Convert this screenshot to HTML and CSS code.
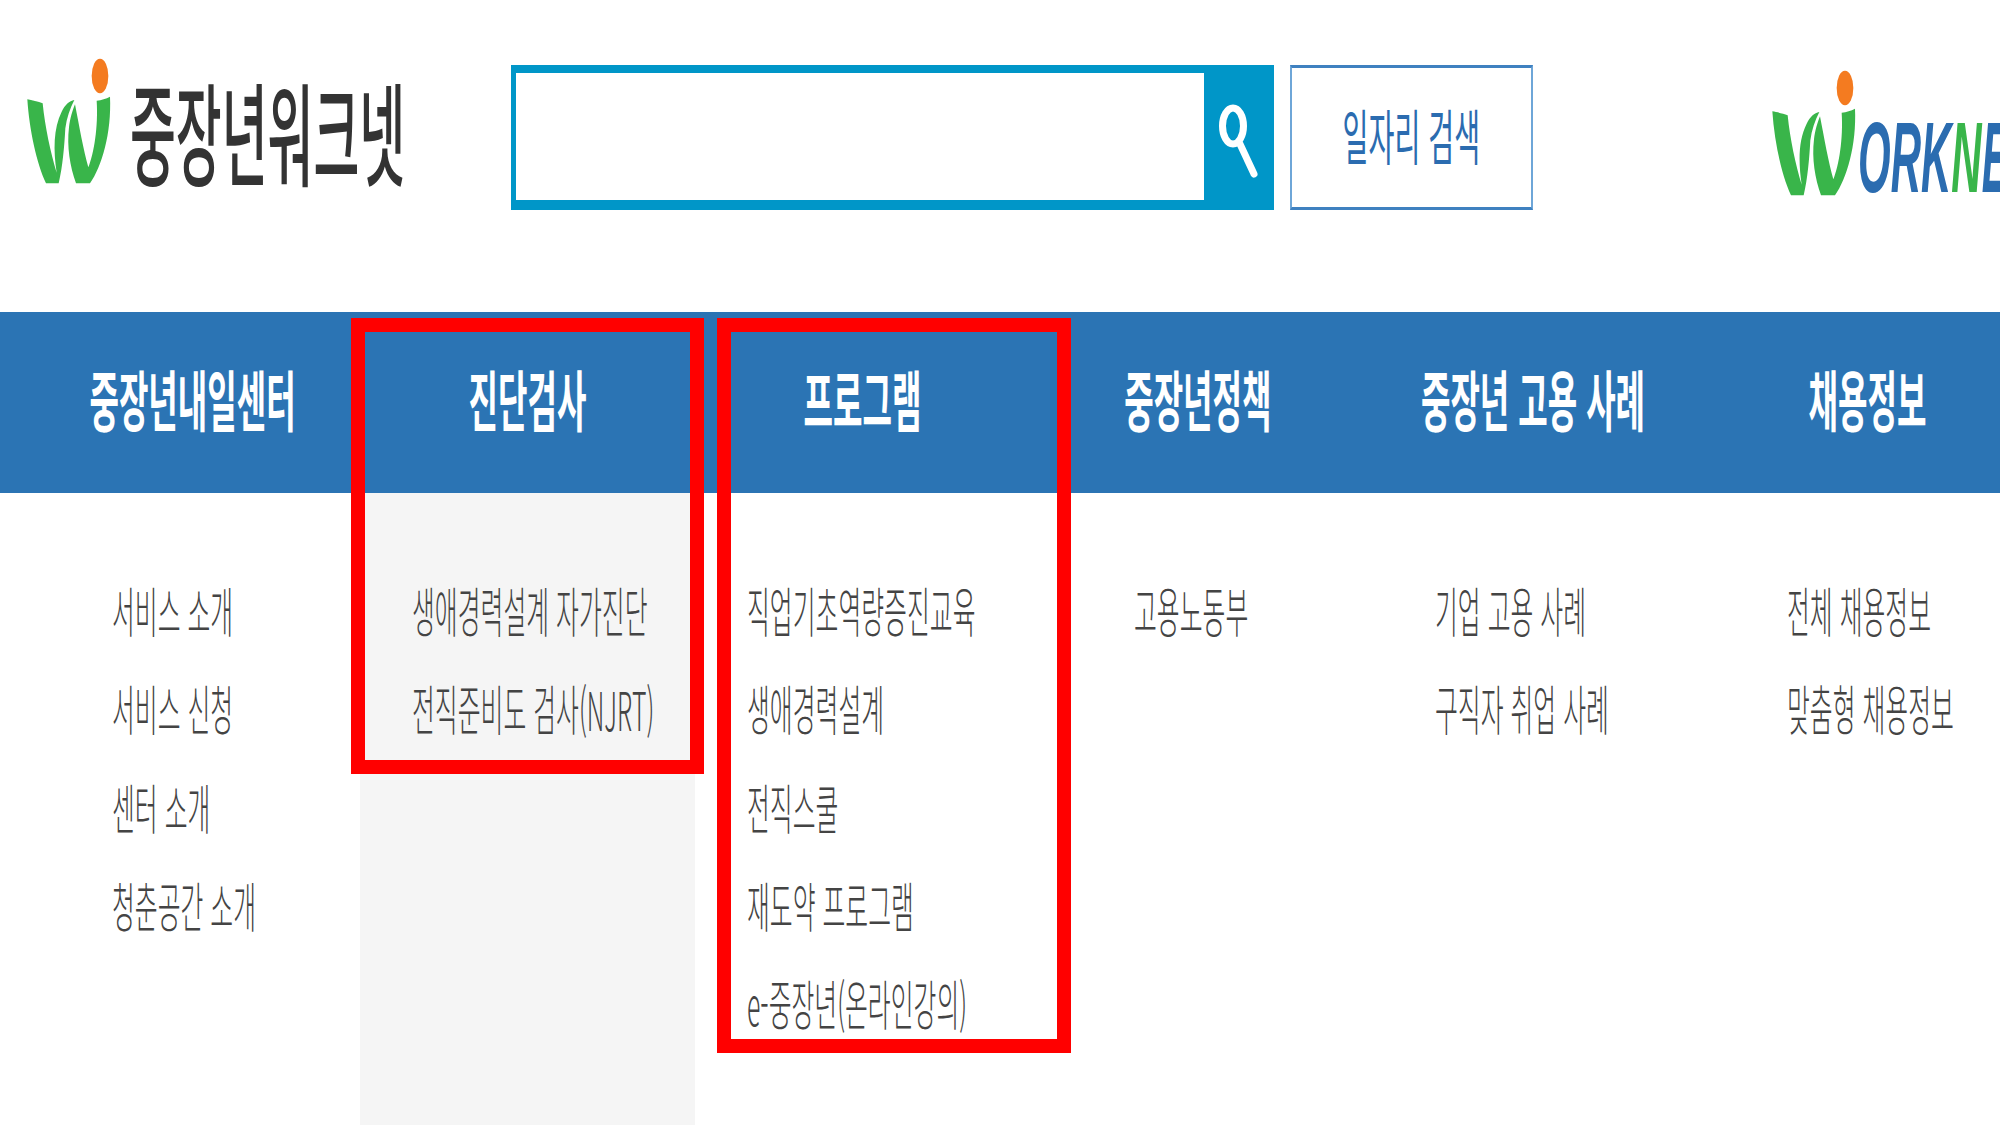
FILE: index.html
```html
<!DOCTYPE html>
<html lang="ko">
<head>
  <meta charset="UTF-8" />
  <title>중장년워크넷</title>
  <link rel="stylesheet" href="styles.css">
</head>
<body>
  <svg class="defs" width="0" height="0">
    <symbol id="wMark" viewBox="0 0 300 435">
      <ellipse cx="240" cy="78" rx="25" ry="52" fill="#f47b20"/>
      <path fill="#39b54a" d="M22 148 C35 150 55 155 68 160 C75 230 92 310 110 368 C100 300 100 235 125 185 C135 165 148 152 163 150 C150 175 140 205 136 235 C133 290 128 350 116 400 L78 400 C50 340 28 240 22 148Z"/>
      <path fill="#39b54a" d="M165 163 C178 230 190 300 205 352 C222 310 235 230 230 152 C245 150 258 146 270 140 C275 250 245 350 210 400 L168 400 C150 350 140 290 147 232 C150 205 158 180 165 163Z"/>
    </symbol>
  </svg>

  <div class="page">
    <header>
      <a class="logo">
        <svg class="mark"><use href="#wMark"/></svg>
        <span class="logo-name squeeze">중장년워크넷</span>
      </a>
      <form class="search">
        <input type="text" />
        <button type="button" class="search-btn">
          <svg width="70" height="127" viewBox="0 0 70 127">
            <ellipse cx="29" cy="53" rx="10.5" ry="18" fill="none" stroke="#fff" stroke-width="7"/>
            <path d="M36 71 L50 101" stroke="#fff" stroke-width="7" stroke-linecap="round"/>
          </svg>
        </button>
      </form>
      <a class="job-btn"><span class="squeeze">일자리 검색</span></a>
      <a class="worknet">
        <svg class="mark"><use href="#wMark"/></svg>
        <span class="worknet-name">ORK<em>N</em>ET</span>
      </a>
    </header>

    <nav class="gnb">
      <a><span class="squeeze">중장년내일센터</span></a>
      <a><span class="squeeze">진단검사</span></a>
      <a><span class="squeeze">프로그램</span></a>
      <a><span class="squeeze">중장년정책</span></a>
      <a><span class="squeeze">중장년 고용 사례</span></a>
      <a><span class="squeeze">채용정보</span></a>
    </nav>

    <div class="submenu">
      <ul class="col-center">
        <li><span class="squeeze">서비스 소개</span></li>
        <li><span class="squeeze">서비스 신청</span></li>
        <li><span class="squeeze">센터 소개</span></li>
        <li><span class="squeeze">청춘공간 소개</span></li>
      </ul>
      <ul class="col-diag">
        <li><span class="squeeze">생애경력설계 자가진단</span></li>
        <li><span class="squeeze">전직준비도 검사(NJRT)</span></li>
      </ul>
      <ul class="col-program">
        <li><span class="squeeze">직업기초역량증진교육</span></li>
        <li><span class="squeeze">생애경력설계</span></li>
        <li><span class="squeeze">전직스쿨</span></li>
        <li><span class="squeeze">재도약 프로그램</span></li>
        <li><span class="squeeze">e-중장년(온라인강의)</span></li>
      </ul>
      <ul class="col-policy">
        <li><span class="squeeze">고용노동부</span></li>
      </ul>
      <ul class="col-cases">
        <li><span class="squeeze">기업 고용 사례</span></li>
        <li><span class="squeeze">구직자 취업 사례</span></li>
      </ul>
      <ul class="col-jobs">
        <li><span class="squeeze">전체 채용정보</span></li>
        <li><span class="squeeze">맞춤형 채용정보</span></li>
      </ul>
    </div>

    <div class="highlight highlight-diag"></div>
    <div class="highlight highlight-program"></div>
  </div>
</body>
</html>
```

FILE: styles.css
```css
html, body {
  margin: 0;
  padding: 0;
  background: #fff;
  overflow: hidden;
}
body {
  font-family: "Noto Sans CJK KR", "Noto Sans", sans-serif;
  color: #444;
}
a {
  color: inherit;
  text-decoration: none;
}
.defs {
  position: absolute;
}
.page {
  position: relative;
  width: 2000px;
  height: 1125px;
  overflow: hidden;
}
.squeeze {
  display: inline-block;
  white-space: nowrap;
  transform: scaleX(0.46);
  transform-origin: left center;
}

/* header */
header {
  display: flex;
  align-items: flex-start;
  height: 312px;
  box-sizing: border-box;
  padding-top: 65px;
}
.mark {
  width: 100px;
  height: 145px;
  flex: none;
}
.logo {
  display: flex;
  width: 491px;
  flex: none;
  margin-left: 20px;
  margin-top: -15px;
  overflow: visible;
}
.logo-name {
  font-size: 112px;
  font-weight: 500;
  line-height: 145px;
  color: #333;
  margin-left: 10px;
  margin-top: 7px;
  transform: scaleX(0.445);
}
.search {
  display: flex;
  width: 763px;
  height: 145px;
  flex: none;
  box-sizing: border-box;
  margin: 0;
  padding: 8px 0 10px 5px;
  background: #0096c8;
}
.search input {
  flex: 1;
  min-width: 0;
  border: none;
  margin: 0;
  padding: 0;
  background: #fff;
}
.search-btn {
  width: 70px;
  height: 127px;
  flex: none;
  border: none;
  padding: 0;
  background: none;
}
.search-btn svg {
  display: block;
}
.job-btn {
  display: flex;
  justify-content: center;
  align-items: center;
  width: 243px;
  height: 145px;
  flex: none;
  box-sizing: border-box;
  margin-left: 16px;
  padding-bottom: 8px;
  border: 2px solid #6ea6d8;
  border-top: 3px solid #3f81c0;
  border-bottom: 3px solid #3f81c0;
  color: #2b6cb0;
  font-size: 60px;
  overflow: hidden;
}
.job-btn .squeeze {
  transform: scaleX(0.47);
  transform-origin: center;
  flex: none;
}
.worknet {
  display: flex;
  margin-left: 232px;
  margin-top: -3px;
}
.worknet-name {
  font-family: "Liberation Sans", sans-serif;
  font-size: 100px;
  font-weight: bold;
  font-style: italic;
  line-height: 1;
  color: #2b6cb0;
  white-space: nowrap;
  margin-left: -7px;
  margin-top: 45px;
  transform: scaleX(0.42);
  transform-origin: left center;
}
.worknet-name em {
  font-style: inherit;
  color: #39b54a;
}

/* main menu */
.gnb {
  display: grid;
  grid-template-columns: repeat(6, 335px);
  height: 181px;
  padding-left: 25px;
  background: #2b74b4;
}
.gnb a {
  display: flex;
  justify-content: center;
  align-items: center;
  color: #fff;
  font-size: 66px;
  font-weight: 700;
  padding-bottom: 11px;
}
.gnb .squeeze {
  flex: none;
  transform: scaleX(0.485);
  transform-origin: center;
}

/* dropdown columns */
.submenu {
  display: grid;
  grid-template-columns: repeat(6, 335px);
  height: 632px;
  padding-left: 25px;
}
.submenu ul {
  list-style: none;
  margin: 0;
  padding: 68px 0 0 0;
  min-width: 0;
}
.submenu li {
  height: 98.3px;
  line-height: 98.3px;
  font-size: 54px;
  font-weight: 300;
  white-space: nowrap;
}
.col-center { padding-left: 87px !important; }
.col-diag {
  padding-left: 52px !important;
  background: #f5f5f5;
}
.col-program { padding-left: 52px !important; }
.col-policy { padding-left: 104px !important; }
.col-cases { padding-left: 70px !important; }
.col-jobs { padding-left: 87px !important; }

/* red marker boxes drawn over the menu */
.highlight {
  position: absolute;
  box-sizing: border-box;
  border: 14px solid #f00;
  top: 318px;
}
.highlight-diag {
  left: 351px;
  width: 353px;
  height: 456px;
}
.highlight-program {
  left: 717px;
  width: 354px;
  height: 735px;
}
```
